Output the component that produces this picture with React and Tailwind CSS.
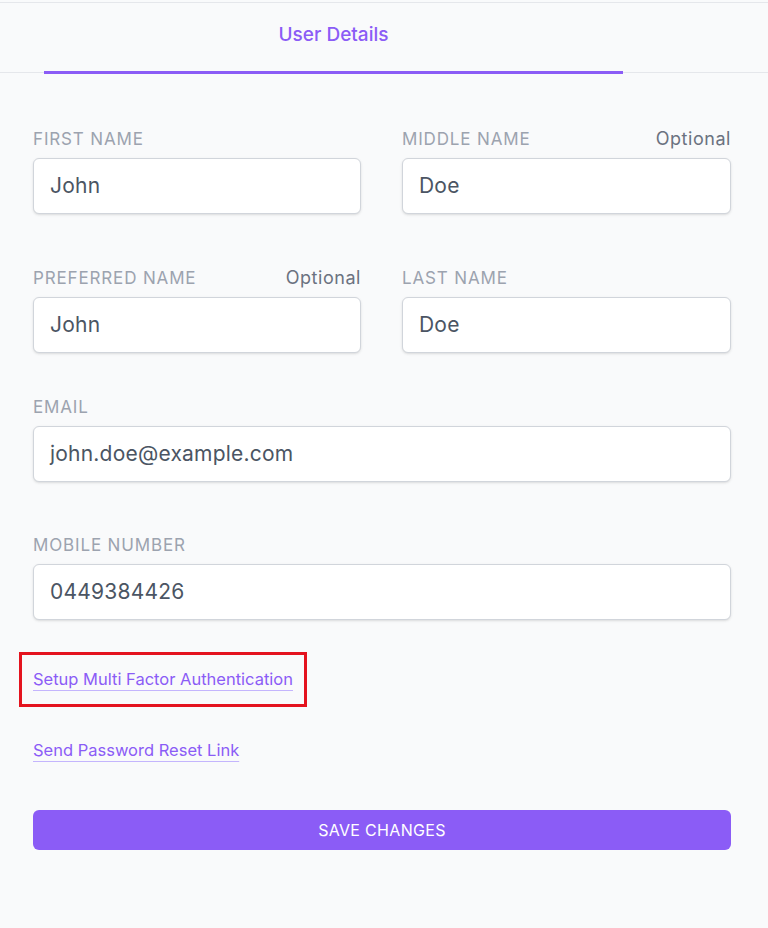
import React from 'react';

const font = {fontFamily: 'Inter, "Noto Sans", sans-serif'};

function Field({label, value, optional, className = ''}) {
  return (
    <div className={`flex flex-col ${className}`}>
      <div className="flex h-6 items-baseline justify-between pt-[1px]">
        <span className="text-[17px] leading-6 uppercase tracking-[0.05em] text-[#9ca3af]">{label}</span>
        {optional && <span className="text-[18px] leading-6 tracking-[0.03em] text-[#6b7280]">Optional</span>}
      </div>
      <div className="mt-2 flex h-[56px] items-center rounded-md border border-[#d1d5db] bg-white px-4 shadow-sm">
        <span className="text-[21px] tracking-[0.01em] text-[#4b5563]">{value}</span>
      </div>
    </div>
  );
}

export default function App() {
  return (
    <div className="min-h-[928px] w-[768px] bg-[#f9fafb]" style={font}>
      <div className="h-[2px]" />
      <div className="flex h-[71px] border-t border-b border-[#e5e7eb]">
        <div className="ml-[44px] flex w-[579px] items-center justify-center border-b-[3px] border-[#8b5cf6] -mb-[2px] pb-[4px]">
          <span className="text-[19px] font-medium text-[#8b5cf6]">User Details</span>
        </div>
      </div>

      <div className="pl-[33px] pr-[37px] pt-[53px]">
        <div className="grid grid-cols-[328px_1fr] gap-x-[41px]">
          <Field label="First Name" value="John" />
          <Field label="Middle Name" value="Doe" optional />
        </div>
        <div className="mt-[51px] grid grid-cols-[328px_1fr] gap-x-[41px]">
          <Field label="Preferred Name" value="John" optional />
          <Field label="Last Name" value="Doe" />
        </div>
        <Field className="mt-[41px]" label="Email" value="john.doe@example.com" />
        <Field className="mt-[50px]" label="Mobile Number" value="0449384426" />

        <div className="mt-[32px] -ml-[14px] flex h-[55px] w-[288px] items-center border-[3px] border-[#e4131e] pl-[11px]">
          <a href="#" className="text-[16.5px] text-[#8b5cf6] underline decoration-[#c4b5fd] underline-offset-[5px]">
            Setup Multi Factor Authentication
          </a>
        </div>
        <div className="mt-[31px] h-6 leading-6">
          <a href="#" className="text-[16.5px] text-[#8b5cf6] underline decoration-[#c4b5fd] underline-offset-[5px]">
            Send Password Reset Link
          </a>
        </div>

        <button className="mt-[48px] flex h-[40px] w-full items-center justify-center rounded-md bg-[#8b5cf6] text-[16px] uppercase tracking-[0.02em] text-white">
          Save Changes
        </button>
      </div>
    </div>
  );
}
